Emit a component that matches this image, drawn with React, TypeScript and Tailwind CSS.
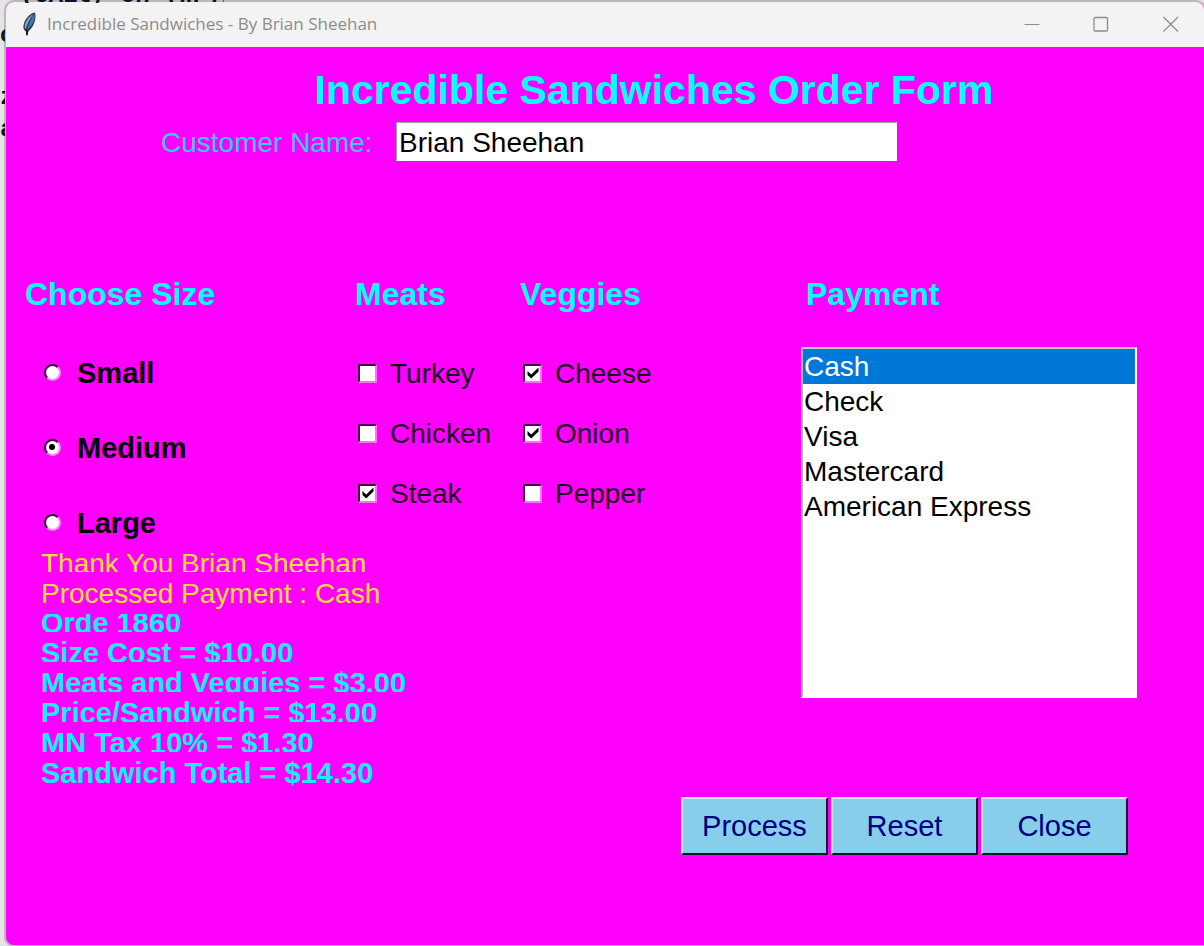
import { useId } from "react";

const sizes = ["Small", "Medium", "Large"];
const meats = ["Turkey", "Chicken", "Steak"];
const veggies = ["Cheese", "Onion", "Pepper"];
const payments = ["Cash", "Check", "Visa", "Mastercard", "American Express"];
const totals = [
  "Orde 1860",
  "Size Cost = $10.00",
  "Meats and Veggies = $3.00",
  "Price/Sandwich = $13.00",
  "MN Tax 10% = $1.30",
];

function Feather() {
  return (
    <svg className="h-6 w-4" viewBox="0 0 16 24" aria-hidden="true">
      <path d="M12.8 0.6C14 2.5 13.8 7 12.2 11C11 14.5 8.8 17.6 6.2 19L5.4 23.4L4.2 23.2L4.2 19C1.4 18.6 1 15.5 1.8 12C3 7.5 7.5 1.6 12.8 0.6Z" fill="#2c3a4c" />
      <path d="M12.3 1.8C9.8 5 6.8 10.5 5.4 17.2C9 14.8 11.2 10.8 12.2 7.4C12.9 5 12.8 3.2 12.3 1.8Z" fill="#4674ab" />
      <path d="M11 2.4C6.8 4.4 3.8 8.8 2.9 12.4C2.4 14.8 2.8 16.6 3.8 17C5 12 7.6 7 11 2.4Z" fill="#7ba4d2" />
      <path d="M11.6 3C8.4 7 6 12.5 4.8 21" fill="none" stroke="#3a5a84" strokeWidth="0.6" />
      <path d="M3.6 17.6L6.6 18.2L5.4 23.2H4.3Z" fill="#15181c" />
    </svg>
  );
}

function SizeRadio({ label }: { label: string }) {
  const id = useId();
  return (
    <div className="flex h-9 items-center gap-4">
      <span className="grid size-[18px] place-items-center">
        <input
          id={id}
          type="radio"
          name="size"
          defaultChecked={label === "Medium"}
          className="peer col-start-1 row-start-1 size-[17px] appearance-none rounded-full border-2 border-t-[#3a003a] border-r-[#ff8cff] border-b-[#ff8cff] border-l-[#3a003a] bg-white"
        />
        <span className="pointer-events-none invisible col-start-1 row-start-1 size-[6px] rounded-full bg-black peer-checked:visible" />
      </span>
      <label htmlFor={id} className="pt-[2px] text-[29px] leading-9 font-bold">{label}</label>
    </div>
  );
}

function Topping({ label, checked }: { label: string; checked: boolean }) {
  const id = useId();
  return (
    <div className="flex h-9 items-center gap-[13px]">
      <span className="grid size-[19px] place-items-center">
        <input
          id={id}
          type="checkbox"
          defaultChecked={checked}
          className="peer col-start-1 row-start-1 size-[19px] appearance-none border-2 border-t-[#4a004a] border-r-[#ff70ff] border-b-[#ff70ff] border-l-[#4a004a] bg-white"
        />
        <svg className="pointer-events-none invisible col-start-1 row-start-1 size-3 peer-checked:visible" viewBox="0 0 12 12" aria-hidden="true">
          <path d="M0.5 4L4.2 7.4L11.5 0.4V4.4L4.2 11.6L0.5 8Z" fill="#000" />
        </svg>
      </span>
      <label htmlFor={id} className="pt-[2px] text-[28px] leading-9 text-[#1c001c]">{label}</label>
    </div>
  );
}

function Heading({ children }: { children: string }) {
  return <h2 className="text-[32px] leading-10 font-bold text-[#00ffff]">{children}</h2>;
}

function TitleBar() {
  return (
    <header className="flex h-[45px] items-center bg-[#f3f3f3] pb-[2px] pl-4 text-[#8c8c8c]">
      <Feather />
      <span className="ml-[9px] flex-1 font-['Open_Sans',sans-serif] text-[17px] leading-6">
        Incredible Sandwiches - By Brian Sheehan
      </span>
      <div className="flex h-full">
        <button type="button" aria-label="Minimize" className="grid w-[64px] place-items-center">
          <svg className="size-4" viewBox="0 0 16 16" fill="none" stroke="currentColor"><path d="M0.5 8.5H15.5" /></svg>
        </button>
        <button type="button" aria-label="Maximize" className="grid w-[74px] place-items-center">
          <svg className="size-4" viewBox="0 0 16 16" fill="none" stroke="currentColor" strokeWidth="1.3"><rect x="1" y="1.5" width="13.5" height="13.5" rx="1.2" /></svg>
        </button>
        <button type="button" aria-label="Close window" className="grid w-[66px] place-items-center">
          <svg className="size-4" viewBox="0 0 16 16" fill="none" stroke="currentColor" strokeWidth="1.2"><path d="M0.5 1L15 15.5M15 1L0.5 15.5" /></svg>
        </button>
      </div>
    </header>
  );
}

function ActionButton({ children }: { children: string }) {
  return (
    <button type="button" className="h-[58px] w-[147px] border-2 border-t-[#d0e4fa] border-r-[#101828] border-b-[#101828] border-l-[#d0e4fa] bg-[#87ceeb] text-[29px] leading-9 text-[#000080]">
      {children}
    </button>
  );
}

/* Slivers of the editor window that sits behind this one. */
function EditorBehind() {
  return (
    <div aria-hidden="true" className="font-['Liberation_Mono',monospace] text-[24px] leading-8 font-bold whitespace-pre text-[#101020]">
      <div className="absolute top-0 left-0 flex h-[3px] w-[224px] flex-col justify-end overflow-hidden pl-5">
        <span className="-mb-[9px]">(OA1t, on .WP.bill</span>
      </div>
      <div className="absolute top-0 left-0 h-full w-[5px] overflow-hidden">
        <div className="mt-5">o</div>
        <div className="mt-[30px]">z</div>
        <div>a</div>
      </div>
    </div>
  );
}

export default function App() {
  return (
    <div className="relative flex min-h-screen flex-col overflow-hidden bg-[#e4e4e6] pt-[2px] pb-px pl-[6px] font-['Liberation_Sans',Arial,sans-serif]">
      <main className="relative flex flex-1 flex-col overflow-hidden rounded-l-lg rounded-tr-lg bg-[#ff00ff] shadow-[0_0_0_2px_#b8b8b8]">
        <TitleBar />
        <form className="flex flex-col pt-[19px]" onSubmit={(e) => e.preventDefault()}>
          <h1 className="pl-[98px] text-center text-[41px] leading-[48px] font-bold text-[#00ffff]">
            Incredible Sandwiches Order Form
          </h1>
          <div className="mt-2 flex items-center pl-[155px] text-[28px]">
            <label htmlFor="customer" className="w-[235px] pt-[3px] leading-9 text-[#33ccff]">Customer Name:</label>
            <input
              id="customer"
              defaultValue="Brian Sheehan"
              className="h-[39px] w-[501px] border border-t-[#a0a0a0] border-r-white border-b-white border-l-[#a0a0a0] bg-white px-[2px] pt-[2px] text-black outline-none"
            />
          </div>

          <div className="mt-[113px] flex pl-[19px]">
            <div className="w-[776px]">
              <div className="grid grid-cols-[330px_165px_1fr]">
                <section>
                  <Heading>Choose Size</Heading>
                  <div className="mt-10 flex flex-col gap-[39px] pl-[18px]">
                    {sizes.map((s) => <SizeRadio key={s} label={s} />)}
                  </div>
                </section>
                <section>
                  <Heading>Meats</Heading>
                  <div className="mt-[41px] flex flex-col gap-6 pl-[3px]">
                    {meats.map((m) => <Topping key={m} label={m} checked={m === "Steak"} />)}
                  </div>
                </section>
                <section>
                  <Heading>Veggies</Heading>
                  <div className="mt-[41px] flex flex-col gap-6 pl-[3px]">
                    {veggies.map((v) => <Topping key={v} label={v} checked={v !== "Pepper"} />)}
                  </div>
                </section>
              </div>
              <div className="mt-[2px] pl-4">
                <div className="text-[28px] leading-[43px] text-[#ffe032]">
                  <p className="h-[30px] overflow-hidden">Thank You Brian Sheehan</p>
                  <p className="relative -mb-3 h-[42px] bg-[#ff00ff]">Processed Payment : Cash</p>
                </div>
                <div className="text-[29px] leading-[42px] font-bold text-[#10f0ff]">
                  {totals.map((t) => <p key={t} className="h-[30px] overflow-hidden">{t}</p>)}
                  <p>Sandwich Total = $14.30</p>
                </div>
              </div>
            </div>
            <section>
              <div className="pl-[5px]"><Heading>Payment</Heading></div>
              <select
                size={10}
                aria-label="Payment"
                defaultValue="Cash"
                className="mt-[33px] block h-[351px] w-[336px] overflow-hidden border-2 border-t-[#c8c8c8] border-r-white border-b-white border-l-[#b0b0b0] bg-white text-[28px] text-black outline-none"
              >
                {payments.map((p) => (
                  <option key={p} className="h-[35px] px-px pt-[2px] pb-0 leading-[33px] checked:bg-[linear-gradient(#0078d7,#0078d7)] checked:text-white">{p}</option>
                ))}
              </select>
            </section>
          </div>

          <div className="mt-[3px] flex gap-[3px] pl-[675px]">
            <ActionButton>Process</ActionButton>
            <ActionButton>Reset</ActionButton>
            <ActionButton>Close</ActionButton>
          </div>
        </form>
      </main>
      <EditorBehind />
    </div>
  );
}
